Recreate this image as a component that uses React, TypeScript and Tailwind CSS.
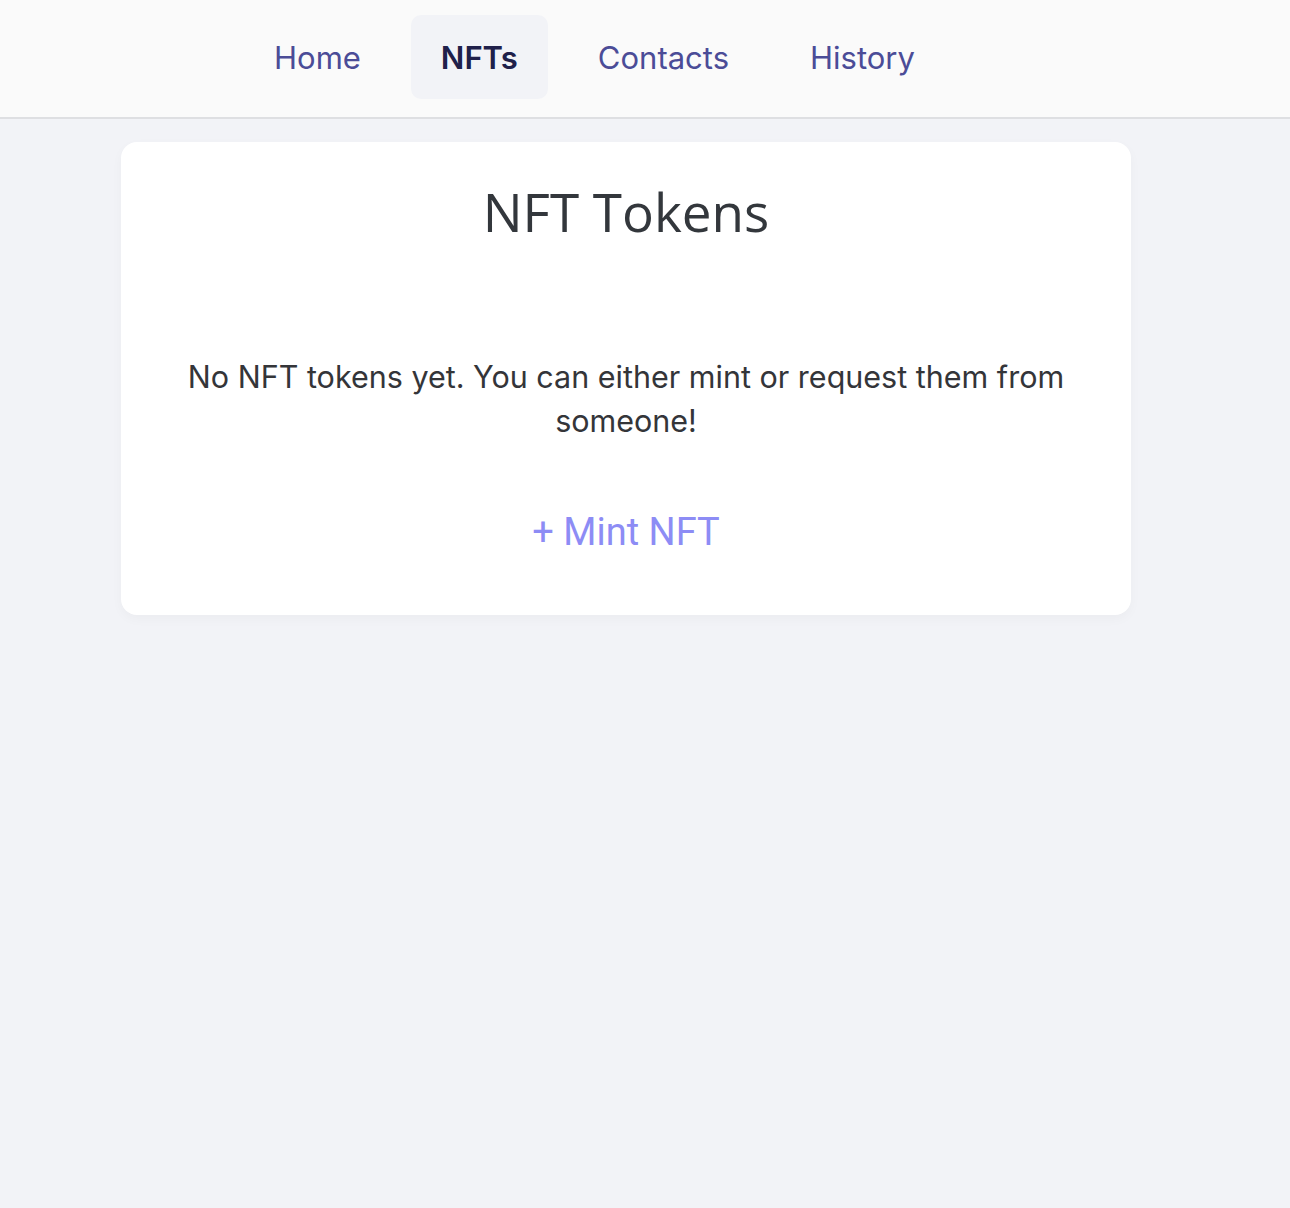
export default function App() {
  const tabs = ['Home', 'NFTs', 'Contacts', 'History']
  const active = 'NFTs'

  return (
    <div className="min-h-[1208px] bg-[#f2f3f7] font-['Inter','Liberation_Sans',sans-serif]">
      <nav className="h-[119px] bg-[#fafafa] border-b-[2px] border-[#dedfe2] pl-[243px] pt-[15px]">
        <ul className="flex gap-[19px]">
          {tabs.map((tab) => (
            <li key={tab}>
              <a
                href="#"
                className={
                  tab === active
                    ? 'flex h-[84px] items-center rounded-[10px] bg-[#f2f3f7] px-[30px] pt-[3px] text-[31px] font-semibold text-[#20204a]'
                    : 'flex h-[84px] items-center rounded-[10px] px-[31px] pt-[3px] text-[31px] text-[#4b4c97]'
                }
              >
                {tab}
              </a>
            </li>
          ))}
        </ul>
      </nav>

      <main className="pt-[23px]">
        <section className="ml-[121px] w-[1010px] rounded-[16px] bg-white px-[56px] pt-[34px] pb-[54px] text-center shadow-[0_4px_12px_rgba(0,0,0,0.03)]">
          <h1 className="font-['Open_Sans','Noto_Sans',sans-serif] text-[53px] leading-[72px] text-[#33373c]">
            NFT Tokens
          </h1>
          <p className="mt-[107px] text-[30.5px] leading-[44px] text-[#343539]">
            No NFT tokens yet. You can either mint or request them from someone!
          </p>
          <button className="mt-[61px] font-['Roboto',sans-serif] text-[38px] text-[#8d8cf5]">
            + Mint NFT
          </button>
        </section>
      </main>
    </div>
  )
}
